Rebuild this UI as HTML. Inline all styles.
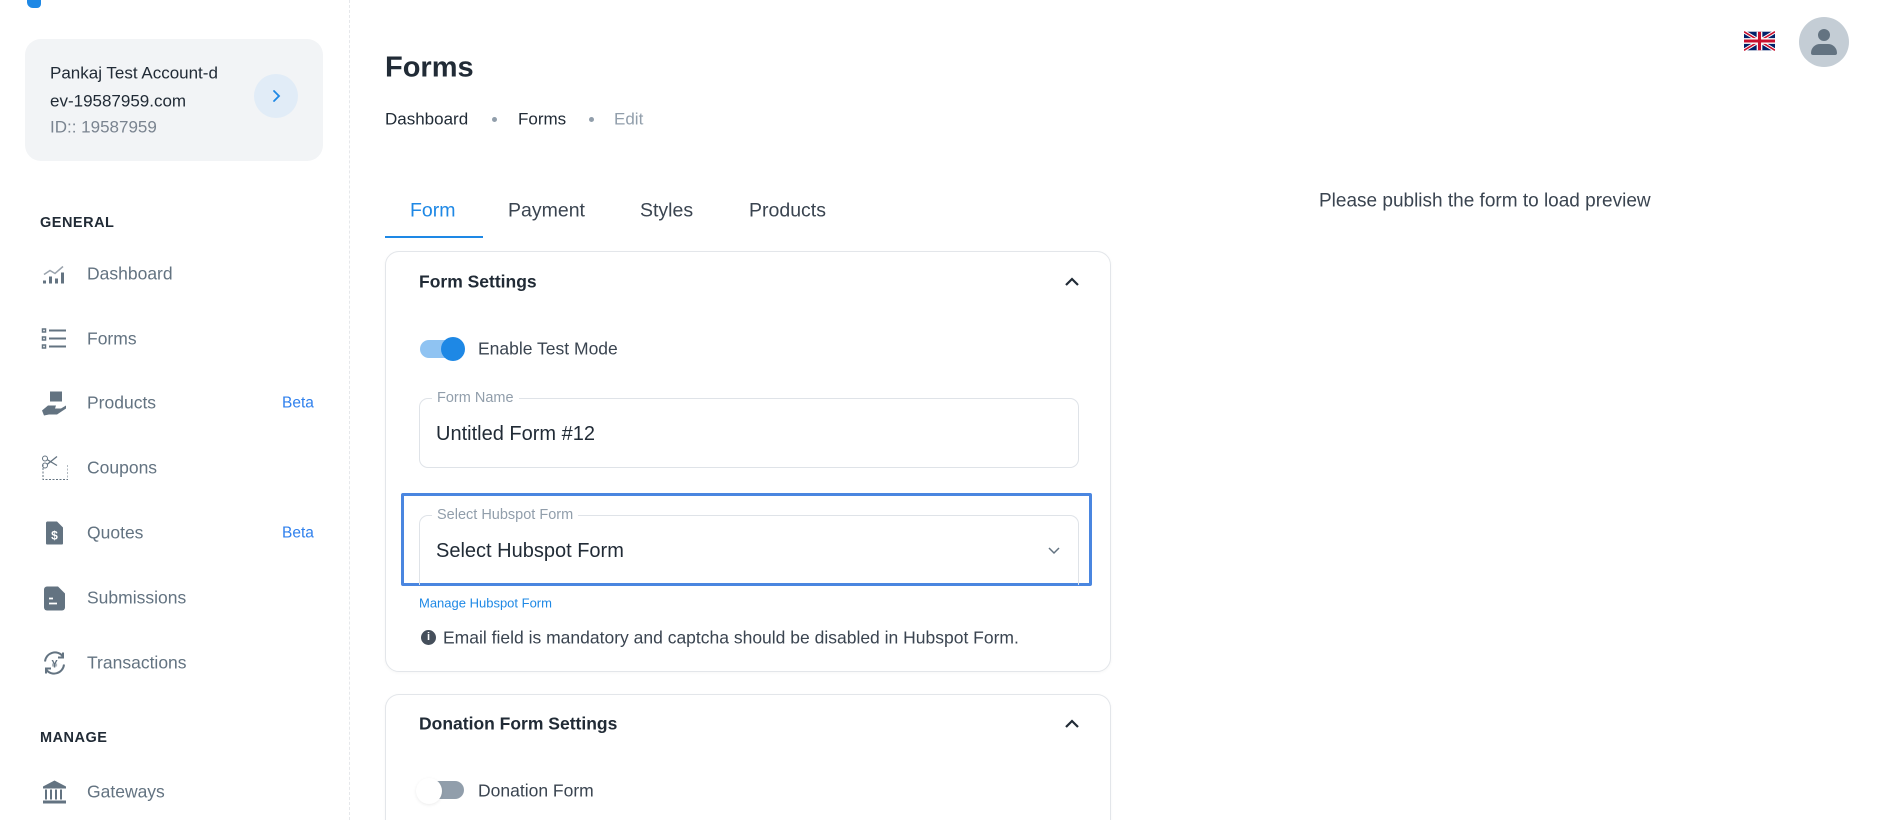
<!DOCTYPE html>
<html><head><meta charset="utf-8"><style>
*{margin:0;padding:0;box-sizing:border-box}
html,body{width:1898px;height:820px;overflow:hidden}
body{background:#fff;font-family:"Liberation Sans",sans-serif;color:#212b36;position:relative}
.a{position:absolute;white-space:nowrap}
.c{line-height:1;transform:translateY(-50%)}
.nav{font-size:17.5px;color:#637381}
.ic{position:absolute;left:41px;width:27px;height:27px;transform:translateY(-50%)}
.beta{font-size:15.5px;color:#2f80ed;left:282px}
.card{position:absolute;left:385px;width:726px;border:1px solid #e3e6ea;border-radius:14px;background:#fff;box-shadow:0 1px 3px rgba(0,0,0,.04)}
.fld{position:absolute;border:1px solid #dfe3e8;border-radius:9px}
.lbl{position:absolute;top:-9px;left:12px;background:#fff;padding:0 5px;font-size:14.5px;color:#919eab;line-height:16px}
</style></head><body>
<div class="a" style="left:27px;top:-6px;width:14px;height:14px;background:#1e88e5;border-radius:0 0 4px 6px"></div>
<div class="a" style="left:349px;top:0;height:820px;border-left:1px dashed #e6e8eb"></div>
<div class="a" style="left:25px;top:39px;width:298px;height:122px;background:#f2f4f6;border-radius:16px"></div>
<div class="a c" style="left:50px;top:73px;font-size:17px;color:#212b36">Pankaj Test Account-d</div>
<div class="a c" style="left:50px;top:101px;font-size:17px;color:#212b36">ev-19587959.com</div>
<div class="a c" style="left:50px;top:127px;font-size:17px;color:#7a8490">ID:: 19587959</div>
<div class="a" style="left:254px;top:74px;width:44px;height:44px;border-radius:50%;background:#e1ecf7"></div>
<svg class="a" style="left:268px;top:88px" width="16" height="16" viewBox="0 0 16 16"><path d="M6 3l5 5-5 5" fill="none" stroke="#1e88e5" stroke-width="1.8" stroke-linecap="round"/></svg>
<div class="a c" style="left:40px;top:223px;font-size:14.5px;font-weight:bold;letter-spacing:.5px">GENERAL</div>
<div class="a c" style="left:40px;top:738px;font-size:14.5px;font-weight:bold;letter-spacing:.5px">MANAGE</div>

<svg class="ic" style="top:274px" viewBox="0 0 27 27"><path d="M3 14l6-4 5 3 8-7" stroke="#9aa3ad" stroke-width="1.5" fill="none"/><rect x="2" y="20" width="3" height="3" fill="#637381"/><rect x="8" y="16" width="3" height="7" fill="#637381"/><rect x="14" y="18" width="3" height="5" fill="#637381"/><rect x="20" y="12" width="3" height="11" fill="#637381"/></svg>
<svg class="ic" style="top:339px" viewBox="0 0 27 27"><g fill="none" stroke="#637381" stroke-width="1.5"><rect x="1.5" y="3.5" width="3" height="3"/><rect x="1.5" y="11.5" width="3" height="3"/><rect x="1.5" y="19.5" width="3" height="3"/><path d="M8 5h17M8 13h17M8 21h17" stroke-width="2"/></g></svg>
<svg class="ic" style="top:403px" viewBox="0 0 27 27"><rect x="9" y="2" width="12" height="10" fill="#637381"/><path d="M1 21l6-5h8l-1 3h6l5-3v3l-9 6H8l-5 1z" fill="#637381"/></svg>
<svg class="ic" style="top:468px" viewBox="0 0 27 27"><path d="M2 10v15h25V10" fill="none" stroke="#637381" stroke-dasharray="2 1.5"/><circle cx="4" cy="4" r="2.5" fill="none" stroke="#637381"/><circle cx="4" cy="11" r="2.5" fill="none" stroke="#637381"/><path d="M6 5l10 6M6 10l10-8" stroke="#637381" stroke-width="1.3"/></svg>
<svg class="ic" style="top:533px" viewBox="0 0 27 27"><path d="M6 2h10l6 6v16a1 1 0 0 1-1 1H6a1 1 0 0 1-1-1V3z" fill="#637381"/><text x="13.5" y="20" font-size="12" font-weight="bold" fill="#fff" text-anchor="middle" font-family="Liberation Sans">$</text></svg>
<svg class="ic" style="top:598px" viewBox="0 0 27 27"><path d="M6 2h11l7 7v14a3 3 0 0 1-3 3H6a3 3 0 0 1-3-3V5a3 3 0 0 1 3-3z" fill="#637381"/><path d="M8 14h4M8 19h8" stroke="#fff" stroke-width="1.8"/></svg>
<svg class="ic" style="top:663px" viewBox="0 0 27 27"><path d="M4 12a10 10 0 0 1 18-5M23 15a10 10 0 0 1-18 5" fill="none" stroke="#637381" stroke-width="2"/><path d="M22 3v5h-5M5 24v-5h5" fill="none" stroke="#637381" stroke-width="2"/><text x="13.5" y="18" font-size="11" font-weight="bold" fill="#637381" text-anchor="middle" font-family="Liberation Sans">¥</text></svg>
<svg class="ic" style="top:792px" viewBox="0 0 27 27"><path d="M13.5 2L2 8v2h23V8z" fill="#637381"/><path d="M5 11v10M10 11v10M15 11v10M20 11v10" stroke="#637381" stroke-width="2"/><rect x="2" y="22" width="23" height="3" fill="#637381"/></svg>

<div class="a c nav" style="left:87px;top:274px">Dashboard</div>
<div class="a c nav" style="left:87px;top:339px">Forms</div>
<div class="a c nav" style="left:87px;top:403px">Products</div>
<div class="a c beta" style="top:403px">Beta</div>
<div class="a c nav" style="left:87px;top:468px">Coupons</div>
<div class="a c nav" style="left:87px;top:533px">Quotes</div>
<div class="a c beta" style="top:533px">Beta</div>
<div class="a c nav" style="left:87px;top:598px">Submissions</div>
<div class="a c nav" style="left:87px;top:663px">Transactions</div>
<div class="a c nav" style="left:87px;top:792px">Gateways</div>

<div class="a c" style="left:385px;top:68px;font-size:29px;font-weight:bold">Forms</div>
<div class="a c" style="left:385px;top:119px;font-size:17px">Dashboard</div>
<div class="a" style="left:492px;top:117px;width:5px;height:5px;border-radius:50%;background:#919eab"></div>
<div class="a c" style="left:518px;top:119px;font-size:17px">Forms</div>
<div class="a" style="left:589px;top:117px;width:5px;height:5px;border-radius:50%;background:#919eab"></div>
<div class="a c" style="left:614px;top:119px;font-size:17px;color:#919eab">Edit</div>

<div class="a c" style="left:410px;top:211px;font-size:19.5px;color:#1e88e5">Form</div>
<div class="a c" style="left:508px;top:211px;font-size:19.5px;color:#3a4450">Payment</div>
<div class="a c" style="left:640px;top:211px;font-size:19.5px;color:#3a4450">Styles</div>
<div class="a c" style="left:749px;top:211px;font-size:19.5px;color:#3a4450">Products</div>
<div class="a" style="left:385px;top:236px;width:98px;height:2px;background:#1e88e5"></div>

<div class="card" style="top:251px;height:421px">
<div class="a c" style="left:33px;top:30px;font-size:17.5px;font-weight:bold">Form Settings</div>
<svg class="a" style="left:678px;top:23px" width="16" height="14" viewBox="0 0 16 14"><path d="M2 10l6-6 6 6" fill="none" stroke="#212b36" stroke-width="2.2"/></svg>
<div class="a" style="left:34px;top:88px;width:44px;height:18px;border-radius:9px;background:#8fc3f2"></div>
<div class="a" style="left:55px;top:85px;width:24px;height:24px;border-radius:50%;background:#1e88e5"></div>
<div class="a c" style="left:92px;top:97px;font-size:17.5px;color:#3a4450">Enable Test Mode</div>
<div class="fld" style="left:33px;top:146px;width:660px;height:70px"><div class="lbl">Form Name</div>
<div class="a c" style="left:16px;top:35px;font-size:20px">Untitled Form #12</div></div>
<div class="a" style="left:15px;top:241px;width:691px;height:93px;border:3px solid #4a86e0;border-radius:2px"></div>
<div class="fld" style="left:33px;top:263px;width:660px;height:70px;border-bottom:none;border-radius:9px 9px 0 0"><div class="lbl">Select Hubspot Form</div>
<div class="a c" style="left:16px;top:35px;font-size:20px">Select Hubspot Form</div>
<svg class="a" style="left:627px;top:29px" width="14" height="10" viewBox="0 0 14 10"><path d="M2 3l5 5 5-5" fill="none" stroke="#637381" stroke-width="1.5"/></svg></div>
<div class="a c" style="left:33px;top:351px;font-size:13px;color:#1e88e5">Manage Hubspot Form</div>
<div class="a" style="left:35px;top:378px;width:15px;height:15px;border-radius:50%;background:#454f5b;color:#fff;font-size:11px;font-weight:bold;text-align:center;line-height:15px">i</div>
<div class="a c" style="left:57px;top:386px;font-size:17.5px;color:#3a4450">Email field is mandatory and captcha should be disabled in Hubspot Form.</div>
</div>

<div class="card" style="top:694px;height:126px;border-bottom:none;border-radius:14px 14px 0 0">
<div class="a c" style="left:33px;top:29px;font-size:17.5px;font-weight:bold">Donation Form Settings</div>
<svg class="a" style="left:678px;top:22px" width="16" height="14" viewBox="0 0 16 14"><path d="M2 10l6-6 6 6" fill="none" stroke="#212b36" stroke-width="2.2"/></svg>
<div class="a" style="left:34px;top:86px;width:44px;height:18px;border-radius:9px;background:#919eab"></div>
<div class="a" style="left:30px;top:83px;width:26px;height:26px;border-radius:50%;background:#fff;box-shadow:0 1px 3px rgba(0,0,0,.08)"></div>
<div class="a c" style="left:92px;top:96px;font-size:17.5px;color:#3a4450">Donation Form</div>
</div>

<div class="a c" style="left:1319px;top:201px;font-size:19px;color:#3a4450">Please publish the form to load preview</div>

<svg class="a" style="left:1744px;top:31px" width="31" height="20" viewBox="0 0 60 36"><rect width="60" height="36" fill="#012169"/><path d="M0 0L60 36M60 0L0 36" stroke="#fff" stroke-width="7"/><path d="M0 0L60 36M60 0L0 36" stroke="#C8102E" stroke-width="3"/><path d="M30 0v36M0 18h60" stroke="#fff" stroke-width="11"/><path d="M30 0v36M0 18h60" stroke="#C8102E" stroke-width="6"/></svg>
<div class="a" style="left:1799px;top:17px;width:50px;height:50px;border-radius:50%;background:#c4cdd5;overflow:hidden">
<div class="a" style="left:19px;top:12px;width:12px;height:12px;border-radius:50%;background:#637381"></div>
<div class="a" style="left:12px;top:27px;width:26px;height:11px;border-radius:9px 9px 2px 2px;background:#637381"></div></div>
</body></html>
